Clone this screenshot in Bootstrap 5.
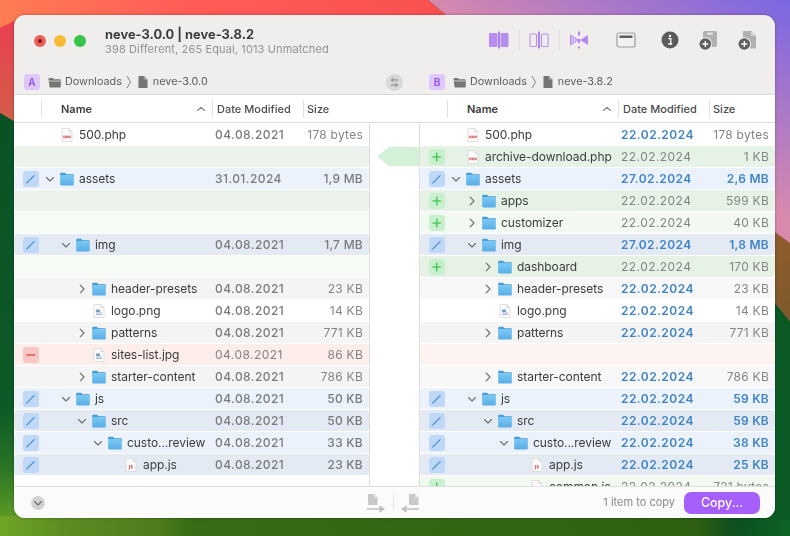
<!DOCTYPE html>
<html lang="en">
<head>
<meta charset="utf-8">
<title>neve-3.0.0 | neve-3.8.2</title>
<link href="https://cdn.jsdelivr.net/npm/bootstrap@5.3.0/dist/css/bootstrap.min.css" rel="stylesheet">
<style>
html{height:536px;overflow:hidden;background:#0b5528}
body{height:536px;overflow:hidden;background:transparent;font-family:Inter,"Liberation Sans",sans-serif;font-size:12px;color:#3a3a3a}
.wallp{position:fixed;left:0;top:0;width:790px;height:536px;z-index:-1}
.appwin{width:761px;height:503px;margin:15px 0 0 14px;background:#efeeed;border-radius:11px;overflow:hidden;box-shadow:0 0 3px rgba(0,0,0,.35)}
.topbar{height:55px;padding:0 18px 3px 20px}
.tools{margin-bottom:2px}
.lt{width:12px;height:12px;border-radius:50%;margin-right:8px;flex:none}
.lt-r{background:#ec5f59;display:flex;align-items:center;justify-content:center}
.lt-r::after{content:"";width:4px;height:4px;border-radius:50%;background:#7c1512}
.lt-y{background:#f8bb35}.lt-g{background:#35c549}
.ttl{margin-left:11px;margin-top:3px;line-height:1}
.ttl-a{font-size:12.85px;font-weight:700;color:#3c3c3c;margin-bottom:2px;margin-top:-1px}
.ttl-b{font-size:11px;color:#929292;letter-spacing:.13px}
.tsep{width:1px;height:20px;background:#e2e1e0;margin:0 9.5px;flex:none}
.m27{margin-left:27px}.m25{margin-left:25px}.m20{margin-left:20px}
.pathbar{height:25px;border-bottom:1px solid #d9d9d9;font-size:10.8px;color:#5c5c5c}
.pth{width:355px;padding-left:10px}
.pth2{width:356px;padding-left:10px}
.swapcol{width:50px;justify-content:center}
.lett{width:16px;height:16px;border-radius:3px;background:#dcc8fb;color:#9450ee;font-size:10px;font-weight:600;text-align:center;line-height:16px;margin-right:9px;flex:none}
.cfold{margin-right:4px;margin-left:-1px;flex:none}
.crumbsep{margin:0 6px 0 4px;flex:none}
.cfile{margin-right:5px;flex:none}
.panes{height:391px;background:#fff}
.pane{width:355px;flex:none}
.hdr{height:28px;background:#fff;border-bottom:1px solid #dcdcdc;padding-top:1px;font-size:11px;font-weight:500;color:#4c4c4c}
.hc{height:18px;border-left:1px solid #e3e3e3;display:flex;align-items:center;flex:none}
.hc0{width:27px;border-left:0}
.hc1{width:171px;padding-left:19px;padding-right:6px;font-weight:600;color:#3c3c3c;justify-content:space-between}
.hc2{width:91px;padding-left:4px}
.hc3{width:66px;padding-left:3px}
.flist{height:363px;overflow:hidden;padding-top:1px}
.frow{height:21px;margin-bottom:1px;border-radius:3px;flex:none}
.flg{width:15.5px;height:16px;margin-left:9px;margin-right:.5px;border-radius:3px;flex:none;display:flex;align-items:center;justify-content:center}
.flg-e{background:#bfd8f7}.flg-a{background:#c8f0ce}.flg-d{background:#f8c6c4}
.nm{width:176px;flex:none;white-space:nowrap;color:#3b3b3b;letter-spacing:-.05px}
.lv0{padding-left:6px}.lv1{padding-left:22px}.lv2{padding-left:38px}.lv3{padding-left:54px}.lv4{padding-left:70px}
.chv{width:10px;height:10px;flex:none;margin-right:5px}
.ic{width:14px;height:14px;flex:none;margin-right:5px}
.dt{width:74px;flex:none;color:#838383;letter-spacing:.45px}
.sz{width:74px;flex:none;text-align:right;color:#858585;white-space:nowrap;letter-spacing:.25px}
.md{font-weight:500;color:#7a7a7a}
.blu{font-weight:600;color:#3f84c6}
.bW{background:#fff}.bG{background:#e6f2e6}.bG1{background:#ecf2ec}.bG2{background:#f1f9f1}.bG3{background:#f6fbf6}
.bB1{background:#ebf2fc}.bB2{background:#e4eaf4}.bN{background:#f4f4f4}.bN2{background:#f7f7f7}.bR{background:#fdeeec}.bR2{background:#fdf4f2}
.gut{width:51px;flex:none;border-left:1px solid #dcdcdc;border-right:1px solid #dcdcdc;height:363px;padding-top:24px}
.gut-h{width:51px;height:28px;flex:none;border-bottom:1px solid #dcdcdc}
.arw{display:block;width:42px;height:19px;margin-left:auto}
.foot{height:32px;background:#fbfbfb;border-top:1px solid #dfdfdf;padding:0 15px 0 17px}
.fcirc{width:14px;height:14px;border-radius:50%;background:#d2d2d2;display:flex;align-items:center;justify-content:center;flex:none}
.fcopy{width:20px;height:20px;flex:none}
.fsp{width:1px;height:15px;background:#e4e4e4;margin:0 6.5px;flex:none}
.fmid{margin-left:321px}
.fcount{margin-left:auto;font-size:11px;color:#8a8a8a;margin-right:9px}
.copybtn{--bs-btn-padding-y:0;--bs-btn-padding-x:0;width:76px;height:22px;background:#a65ffb;border:0;color:#fff;font-size:12.5px;font-weight:500;line-height:22px;border-radius:7px}
.copybtn:hover{background:#a65ffb;color:#fff}
</style>
</head>
<body>
<svg class="wallp" viewBox="0 0 790 536" aria-hidden="true">
<defs>
<linearGradient id="gpur" gradientUnits="userSpaceOnUse" x1="430" y1="10" x2="526" y2="-154"><stop offset="0" stop-color="#d98aac"/><stop offset="1" stop-color="#7a66e4"/></linearGradient>
<linearGradient id="gred" x1="0" x2="1" y1="0" y2="0"><stop offset="0" stop-color="#ff7c52"/><stop offset=".4" stop-color="#ff5d58"/><stop offset="1" stop-color="#f94f50"/></linearGradient>
<linearGradient id="gred2" x1="0" x2="0" y1="0" y2="1"><stop offset="0" stop-color="#ea3f50"/><stop offset="1" stop-color="#d2604a"/></linearGradient>
<linearGradient id="gleft" x1="0" x2="0" y1="0" y2="1"><stop offset="0" stop-color="#0a5226"/><stop offset=".7" stop-color="#0d5a26"/><stop offset=".84" stop-color="#2a7524"/><stop offset="1" stop-color="#70a825"/></linearGradient>
<linearGradient id="gbot" x1="0" x2="1" y1="0" y2="0"><stop offset="0" stop-color="#6ea625"/><stop offset=".08" stop-color="#5d8c22"/><stop offset=".2" stop-color="#4f7c1c"/><stop offset=".24" stop-color="#376d15"/><stop offset=".88" stop-color="#2e6012"/><stop offset=".93" stop-color="#0d4f20"/><stop offset="1" stop-color="#0c6326"/></linearGradient>
<linearGradient id="gbr" x1="0" x2="0" y1="0" y2="1"><stop offset="0" stop-color="#8e5c2e"/><stop offset="1" stop-color="#7e5a2c"/></linearGradient>
<linearGradient id="gfld" x1="0" x2="0" y1="0" y2="1"><stop offset="0" stop-color="#7ccaf4"/><stop offset="1" stop-color="#58ade6"/></linearGradient>
<symbol id="fld" viewBox="0 0 14 14"><path d="M1.200.8h3.800l1.500 1.500h6.300a1 1 0 0 1 1 1v2H.2V1.800a1 1 0 0 1 1-1z" fill="#4a9bd4"/><rect x=".2" y="3" width="13.600" height="10.600" rx="1.300" fill="url(#gfld)"/></symbol>
<symbol id="php" viewBox="0 0 14 14"><path d="M2 .5h7l3 3v10H2z" fill="#fbfbfb" stroke="#d4d4d4" stroke-width=".7"/><path d="M9 .5v3h3" fill="#e6e6e6" stroke="#d4d4d4" stroke-width=".6"/><rect x="3" y="7" width="8" height="3.600" fill="#f4dcdc"/><path d="M3.700 7.900v2M5 7.900v2M6.400 7.900v2M7.700 7.900v2M9 7.900v2M10.200 7.900v2" stroke="#c43b3b" stroke-width=".7"/></symbol>
<symbol id="js" viewBox="0 0 14 14"><path d="M2 .5h7l3 3v10H2z" fill="#fbfbfb" stroke="#d4d4d4" stroke-width=".7"/><path d="M9 .5v3h3" fill="#e6e6e6" stroke="#d4d4d4" stroke-width=".6"/><path d="M5.600 7v3.400q0 1-1 .9M8.600 7.300q-1.600-.4-1.600.7t1.600 1q0 1.400-1.700.9" fill="none" stroke="#c43b3b" stroke-width=".8"/></symbol>
<symbol id="png" viewBox="0 0 14 14"><path d="M2 .5h7l3 3v10H2z" fill="#fbfbfb" stroke="#d4d4d4" stroke-width=".7"/><path d="M9 .5v3h3" fill="#e6e6e6" stroke="#d4d4d4" stroke-width=".6"/><rect x="4" y="5.500" width="4" height="2.500" fill="#7f9fc4"/><path d="M4 9h6M4 10.500h6" stroke="#7f9fc4" stroke-width=".7"/></symbol>
<symbol id="cd" viewBox="0 0 10 10"><path d="M1.500 3.500 5 7l3.500-3.500" fill="none" stroke="#6c6c6c" stroke-width="1.100" stroke-linecap="round" stroke-linejoin="round"/></symbol>
<symbol id="cr" viewBox="0 0 10 10"><path d="M3.200 1.200 7 5 3.200 8.800" fill="none" stroke="#6c6c6c" stroke-width="1.100" stroke-linecap="round" stroke-linejoin="round"/></symbol>
<symbol id="pen" viewBox="0 0 16 16"><path d="M4 12 11.500 4.500" stroke="#4a8ed6" stroke-width="1.300" stroke-linecap="round"/><path d="M3.500 12.500l.4-1.200.8.800z" fill="#4a8ed6"/></symbol>
<symbol id="pls" viewBox="0 0 16 16"><path d="M8 4.200v7.600M4.200 8h7.600" stroke="#4fca60" stroke-width="1.700" stroke-linecap="round"/></symbol>
<symbol id="mns" viewBox="0 0 16 16"><path d="M4 8h8" stroke="#e6534f" stroke-width="1.700" stroke-linecap="round"/></symbol>
<symbol id="sup" viewBox="0 0 10 10"><path d="M1.500 6.500 5 3.300l3.500 3.200" fill="none" stroke="#7e7e7e" stroke-width="1.100" stroke-linecap="round" stroke-linejoin="round"/></symbol>
<symbol id="cf" viewBox="0 0 13 11"><path d="M.5 2a1 1 0 0 1 1-1h3.200l1.300 1.300h5.800a1 1 0 0 1 1 1v6.200a1 1 0 0 1-1 1h-9.300a1 1 0 0 1-1-1z" fill="#757575"/><path d="M.5 4h12" stroke="#efeeed" stroke-width=".7"/></symbol>
<symbol id="cp" viewBox="0 0 10 12"><path d="M.5 0h5.300L9.500 3.700V12H.5z" fill="#757575"/><path d="M5.800 0v3.700h3.700" fill="#a0a0a0"/></symbol>
<symbol id="csep" viewBox="0 0 6 14"><path d="M1 1l3.500 6L1 13" fill="none" stroke="#777" stroke-width=".9"/></symbol>
</defs>
<rect width="790" height="536" fill="#0a5226"/>
<polygon points="428,0 790,0 790,250 446,250 446,15" fill="url(#gpur)"/>
<polygon points="775,232 790,243 790,322 775,303" fill="url(#gbr)"/>
<polygon points="0,0 428,0 446,15 446,30 0,30" fill="url(#gred)"/>
<polygon points="0,28 20,18 20,125 0,113" fill="url(#gred2)"/>
<polygon points="0,113 20,125 20,536 0,536" fill="url(#gleft)"/>
<rect y="516" width="790" height="20" fill="url(#gbot)"/>
<polygon points="770,300 790,322 790,520 770,520" fill="#0b5a26"/>
</svg>

<div class="appwin d-flex flex-column">
  <div class="topbar d-flex align-items-center">
    <span class="lt lt-r"></span><span class="lt lt-y"></span><span class="lt lt-g"></span>
    <div class="ttl">
      <div class="ttl-a">neve-3.0.0 | neve-3.8.2</div>
      <div class="ttl-b">398 Different, 265 Equal, 1013 Unmatched</div>
    </div>
    <div class="tools d-flex align-items-center ms-auto">
      <svg width="20" height="20" viewBox="0 0 20 20"><rect x="0" y="3" width="8.500" height="14" rx="1" fill="#b88df1"/><rect x="11.500" y="3" width="8" height="14" rx="1" fill="#b88df1"/><path d="M10 1.500v17" stroke="#8b4ef0" stroke-width="1.300"/></svg>
      <span class="tsep"></span>
      <svg width="20" height="20" viewBox="0 0 20 20"><rect x="1" y="4" width="6.500" height="12.500" rx="1" fill="none" stroke="#b88df1" stroke-width="1.100"/><rect x="12.500" y="4" width="6.500" height="12.500" rx="1" fill="none" stroke="#b88df1" stroke-width="1.100"/><path d="M10 1.500v17" stroke="#8b4ef0" stroke-width="1.300"/></svg>
      <span class="tsep"></span>
      <svg width="20" height="20" viewBox="0 0 20 20"><path d="M1.500 5l7.500 5-7.500 5z" fill="#d4bcf6" stroke="#b88df1"/><path d="M19 5l-8 5 8 5z" fill="#b88df1"/><path d="M10 1.500v17" stroke="#8b4ef0" stroke-width="1.300" stroke-dasharray="4 3.500"/></svg>
      <svg class="m27" width="20" height="20" viewBox="0 0 20 20"><rect x="1" y="3" width="18" height="14" rx="2" fill="#f2f1f0" stroke="#9c9c9c" stroke-width="1.200"/><rect x="3.500" y="5.500" width="13" height="2.500" fill="#5e5e5e"/></svg>
      <svg class="m25" width="18" height="18" viewBox="0 0 18 18"><circle cx="9" cy="9" r="8.500" fill="#5b5b5b"/><circle cx="9" cy="5" r="1.200" fill="#fff"/><path d="M7.300 7.700h2.500v5M7.200 13h4" stroke="#fff" stroke-width="1.300" fill="none"/></svg>
      <svg class="m20" width="19" height="20" viewBox="0 0 19 20"><rect x="4" y="1" width="14" height="16" rx="1.800" fill="#b0b0b0"/><rect x="8" y="2.700" width="6" height="1.800" rx=".5" fill="#efeeed"/><circle cx="6.300" cy="14" r="6.800" fill="#efeeed"/><circle cx="6.300" cy="14" r="5.800" fill="#5f5f5f"/><path d="M6.300 11v6M3.300 14h6" stroke="#fff" stroke-width="1.300"/></svg>
      <svg class="m20" width="19" height="20" viewBox="0 0 19 20"><path d="M5 1h8l5 5v11.500a1 1 0 0 1-1 1H6a1 1 0 0 1-1-1z" fill="#b0b0b0"/><path d="M13 1v5h5" fill="#d4d4d4"/><circle cx="6.300" cy="14" r="6.800" fill="#efeeed"/><circle cx="6.300" cy="14" r="5.800" fill="#5f5f5f"/><path d="M6.300 11v6M3.300 14h6" stroke="#fff" stroke-width="1.300"/></svg>
    </div>
  </div>

  <div class="pathbar d-flex align-items-center">
    <div class="pth d-flex align-items-center">
      <span class="lett">A</span>
      <svg class="cfold" width="13" height="11"><use href="#cf"/></svg><span>Downloads</span>
      <svg class="crumbsep" width="6" height="14"><use href="#csep"/></svg>
      <svg class="cfile" width="10" height="12"><use href="#cp"/></svg><span>neve-3.0.0</span>
    </div>
    <div class="swapcol d-flex">
      <svg width="17" height="17" viewBox="0 0 17 17"><circle cx="8.500" cy="8.500" r="8.500" fill="#d8d8d8"/><path d="M12 6H5.500M7.500 4 5.300 6l2.200 2M5 11h6.500M9.500 9l2.200 2-2.200 2" fill="none" stroke="#7c7c7c" stroke-width="1"/></svg>
    </div>
    <div class="pth2 d-flex align-items-center">
      <span class="lett">B</span>
      <svg class="cfold" width="13" height="11"><use href="#cf"/></svg><span>Downloads</span>
      <svg class="crumbsep" width="6" height="14"><use href="#csep"/></svg>
      <svg class="cfile" width="10" height="12"><use href="#cp"/></svg><span>neve-3.8.2</span>
    </div>
  </div>

  <div class="panes d-flex">
    <div class="pane">
      <div class="hdr d-flex align-items-center">
        <span class="hc hc0"></span>
        <span class="hc hc1">Name<svg width="10" height="10"><use href="#sup"/></svg></span>
        <span class="hc hc2">Date Modified</span>
        <span class="hc hc3">Size</span>
      </div>
      <div class="flist d-flex flex-column">
        <div class="frow bW d-flex align-items-center"><span class="flg"></span><div class="nm lv0 d-flex align-items-center"><span class="chv"></span><svg class="ic"><use href="#php"/></svg><span>500.php</span></div><span class="dt md">04.08.2021</span><span class="sz">178 bytes</span></div>
        <div class="frow bG1"></div>
        <div class="frow bB1 d-flex align-items-center"><span class="flg flg-e"><svg width="16" height="16"><use href="#pen"/></svg></span><div class="nm lv0 d-flex align-items-center"><svg class="chv"><use href="#cd"/></svg><svg class="ic"><use href="#fld"/></svg><span>assets</span></div><span class="dt md">31.01.2024</span><span class="sz md">1,9 MB</span></div>
        <div class="frow bG1"></div>
        <div class="frow bG3"></div>
        <div class="frow bB2 d-flex align-items-center"><span class="flg flg-e"><svg width="16" height="16"><use href="#pen"/></svg></span><div class="nm lv1 d-flex align-items-center"><svg class="chv"><use href="#cd"/></svg><svg class="ic"><use href="#fld"/></svg><span>img</span></div><span class="dt md">04.08.2021</span><span class="sz md">1,7 MB</span></div>
        <div class="frow bG3"></div>
        <div class="frow bN d-flex align-items-center"><span class="flg"></span><div class="nm lv2 d-flex align-items-center"><svg class="chv"><use href="#cr"/></svg><svg class="ic"><use href="#fld"/></svg><span>header-presets</span></div><span class="dt md">04.08.2021</span><span class="sz">23 KB</span></div>
        <div class="frow bW d-flex align-items-center"><span class="flg"></span><div class="nm lv2 d-flex align-items-center"><span class="chv"></span><svg class="ic"><use href="#png"/></svg><span>logo.png</span></div><span class="dt md">04.08.2021</span><span class="sz">14 KB</span></div>
        <div class="frow bN d-flex align-items-center"><span class="flg"></span><div class="nm lv2 d-flex align-items-center"><svg class="chv"><use href="#cr"/></svg><svg class="ic"><use href="#fld"/></svg><span>patterns</span></div><span class="dt md">04.08.2021</span><span class="sz">771 KB</span></div>
        <div class="frow bR d-flex align-items-center"><span class="flg flg-d"><svg width="16" height="16"><use href="#mns"/></svg></span><div class="nm lv2 d-flex align-items-center"><span class="chv"></span><svg class="ic"><use href="#png"/></svg><span>sites-list.jpg</span></div><span class="dt">04.08.2021</span><span class="sz">86 KB</span></div>
        <div class="frow bN d-flex align-items-center"><span class="flg"></span><div class="nm lv2 d-flex align-items-center"><svg class="chv"><use href="#cr"/></svg><svg class="ic"><use href="#fld"/></svg><span>starter-content</span></div><span class="dt md">04.08.2021</span><span class="sz">786 KB</span></div>
        <div class="frow bB1 d-flex align-items-center"><span class="flg flg-e"><svg width="16" height="16"><use href="#pen"/></svg></span><div class="nm lv1 d-flex align-items-center"><svg class="chv"><use href="#cd"/></svg><svg class="ic"><use href="#fld"/></svg><span>js</span></div><span class="dt md">04.08.2021</span><span class="sz md">50 KB</span></div>
        <div class="frow bB2 d-flex align-items-center"><span class="flg flg-e"><svg width="16" height="16"><use href="#pen"/></svg></span><div class="nm lv2 d-flex align-items-center"><svg class="chv"><use href="#cd"/></svg><svg class="ic"><use href="#fld"/></svg><span>src</span></div><span class="dt md">04.08.2021</span><span class="sz md">50 KB</span></div>
        <div class="frow bB1 d-flex align-items-center"><span class="flg flg-e"><svg width="16" height="16"><use href="#pen"/></svg></span><div class="nm lv3 d-flex align-items-center"><svg class="chv"><use href="#cd"/></svg><svg class="ic"><use href="#fld"/></svg><span>custo...review</span></div><span class="dt md">04.08.2021</span><span class="sz md">33 KB</span></div>
        <div class="frow bB2 d-flex align-items-center"><span class="flg flg-e"><svg width="16" height="16"><use href="#pen"/></svg></span><div class="nm lv4 d-flex align-items-center"><span class="chv"></span><svg class="ic"><use href="#js"/></svg><span>app.js</span></div><span class="dt md">04.08.2021</span><span class="sz md">23 KB</span></div>
      </div>
    </div>

    <div class="d-flex flex-column">
      <div class="gut-h"></div>
      <div class="gut"><svg class="arw" viewBox="0 0 42 19" preserveAspectRatio="none"><polygon points="0,9.500 12,0 42,0 42,19 12,19" fill="#d4f0d6"/></svg></div>
    </div>

    <div class="pane">
      <div class="hdr d-flex align-items-center">
        <span class="hc hc0"></span>
        <span class="hc hc1">Name<svg width="10" height="10"><use href="#sup"/></svg></span>
        <span class="hc hc2">Date Modified</span>
        <span class="hc hc3">Size</span>
      </div>
      <div class="flist d-flex flex-column">
        <div class="frow bW d-flex align-items-center"><span class="flg"></span><div class="nm lv0 d-flex align-items-center"><span class="chv"></span><svg class="ic"><use href="#php"/></svg><span>500.php</span></div><span class="dt blu">22.02.2024</span><span class="sz">178 bytes</span></div>
        <div class="frow bG d-flex align-items-center"><span class="flg flg-a"><svg width="16" height="16"><use href="#pls"/></svg></span><div class="nm lv0 d-flex align-items-center"><span class="chv"></span><svg class="ic"><use href="#php"/></svg><span>archive-download.php</span></div><span class="dt">22.02.2024</span><span class="sz">1 KB</span></div>
        <div class="frow bB1 d-flex align-items-center"><span class="flg flg-e"><svg width="16" height="16"><use href="#pen"/></svg></span><div class="nm lv0 d-flex align-items-center"><svg class="chv"><use href="#cd"/></svg><svg class="ic"><use href="#fld"/></svg><span>assets</span></div><span class="dt blu">27.02.2024</span><span class="sz blu">2,6 MB</span></div>
        <div class="frow bG d-flex align-items-center"><span class="flg flg-a"><svg width="16" height="16"><use href="#pls"/></svg></span><div class="nm lv1 d-flex align-items-center"><svg class="chv"><use href="#cr"/></svg><svg class="ic"><use href="#fld"/></svg><span>apps</span></div><span class="dt">22.02.2024</span><span class="sz">599 KB</span></div>
        <div class="frow bG2 d-flex align-items-center"><span class="flg flg-a"><svg width="16" height="16"><use href="#pls"/></svg></span><div class="nm lv1 d-flex align-items-center"><svg class="chv"><use href="#cr"/></svg><svg class="ic"><use href="#fld"/></svg><span>customizer</span></div><span class="dt">22.02.2024</span><span class="sz">40 KB</span></div>
        <div class="frow bB2 d-flex align-items-center"><span class="flg flg-e"><svg width="16" height="16"><use href="#pen"/></svg></span><div class="nm lv1 d-flex align-items-center"><svg class="chv"><use href="#cd"/></svg><svg class="ic"><use href="#fld"/></svg><span>img</span></div><span class="dt blu">27.02.2024</span><span class="sz blu">1,8 MB</span></div>
        <div class="frow bG d-flex align-items-center"><span class="flg flg-a"><svg width="16" height="16"><use href="#pls"/></svg></span><div class="nm lv2 d-flex align-items-center"><svg class="chv"><use href="#cr"/></svg><svg class="ic"><use href="#fld"/></svg><span>dashboard</span></div><span class="dt">22.02.2024</span><span class="sz">170 KB</span></div>
        <div class="frow bN2 d-flex align-items-center"><span class="flg"></span><div class="nm lv2 d-flex align-items-center"><svg class="chv"><use href="#cr"/></svg><svg class="ic"><use href="#fld"/></svg><span>header-presets</span></div><span class="dt blu">22.02.2024</span><span class="sz">23 KB</span></div>
        <div class="frow bW d-flex align-items-center"><span class="flg"></span><div class="nm lv2 d-flex align-items-center"><span class="chv"></span><svg class="ic"><use href="#png"/></svg><span>logo.png</span></div><span class="dt blu">22.02.2024</span><span class="sz">14 KB</span></div>
        <div class="frow bN d-flex align-items-center"><span class="flg"></span><div class="nm lv2 d-flex align-items-center"><svg class="chv"><use href="#cr"/></svg><svg class="ic"><use href="#fld"/></svg><span>patterns</span></div><span class="dt blu">22.02.2024</span><span class="sz">771 KB</span></div>
        <div class="frow bR2"></div>
        <div class="frow bN2 d-flex align-items-center"><span class="flg"></span><div class="nm lv2 d-flex align-items-center"><svg class="chv"><use href="#cr"/></svg><svg class="ic"><use href="#fld"/></svg><span>starter-content</span></div><span class="dt blu">22.02.2024</span><span class="sz">786 KB</span></div>
        <div class="frow bB1 d-flex align-items-center"><span class="flg flg-e"><svg width="16" height="16"><use href="#pen"/></svg></span><div class="nm lv1 d-flex align-items-center"><svg class="chv"><use href="#cd"/></svg><svg class="ic"><use href="#fld"/></svg><span>js</span></div><span class="dt blu">22.02.2024</span><span class="sz blu">59 KB</span></div>
        <div class="frow bB2 d-flex align-items-center"><span class="flg flg-e"><svg width="16" height="16"><use href="#pen"/></svg></span><div class="nm lv2 d-flex align-items-center"><svg class="chv"><use href="#cd"/></svg><svg class="ic"><use href="#fld"/></svg><span>src</span></div><span class="dt blu">22.02.2024</span><span class="sz blu">59 KB</span></div>
        <div class="frow bB1 d-flex align-items-center"><span class="flg flg-e"><svg width="16" height="16"><use href="#pen"/></svg></span><div class="nm lv3 d-flex align-items-center"><svg class="chv"><use href="#cd"/></svg><svg class="ic"><use href="#fld"/></svg><span>custo...review</span></div><span class="dt blu">22.02.2024</span><span class="sz blu">38 KB</span></div>
        <div class="frow bB2 d-flex align-items-center"><span class="flg flg-e"><svg width="16" height="16"><use href="#pen"/></svg></span><div class="nm lv4 d-flex align-items-center"><span class="chv"></span><svg class="ic"><use href="#js"/></svg><span>app.js</span></div><span class="dt blu">22.02.2024</span><span class="sz blu">25 KB</span></div>
        <div class="frow bG2 d-flex align-items-center"><span class="flg flg-a"><svg width="16" height="16"><use href="#pls"/></svg></span><div class="nm lv4 d-flex align-items-center"><span class="chv"></span><svg class="ic"><use href="#js"/></svg><span>common.js</span></div><span class="dt">22.02.2024</span><span class="sz">721 bytes</span></div>
      </div>
    </div>
  </div>

  <div class="foot d-flex align-items-center">
    <span class="fcirc"><svg width="10" height="10"><use href="#cd"/></svg></span>
    <svg class="fcopy fmid" viewBox="0 0 20 20"><path d="M2 1h6l3.500 3.500V12H2z" fill="#c9c9c9"/><path d="M8 1v3.500h3.500" fill="#e6e6e6"/><path d="M1 16h16M14 13.500l4 2.500-4 2.500z" stroke="#c0c0c0" stroke-width="1.300" fill="#c0c0c0"/></svg>
    <span class="fsp"></span>
    <svg class="fcopy" viewBox="0 0 20 20"><path d="M9 1h6l3.500 3.500V12H9z" fill="#c9c9c9"/><path d="M15 1v3.500h3.500" fill="#e6e6e6"/><path d="M19 16H3M6 13.500 2 16l4 2.500z" stroke="#c0c0c0" stroke-width="1.300" fill="#c0c0c0"/></svg>
    <span class="fcount">1 item to copy</span>
    <button type="button" class="btn copybtn">Copy...</button>
  </div>
</div>
</body>
</html>
